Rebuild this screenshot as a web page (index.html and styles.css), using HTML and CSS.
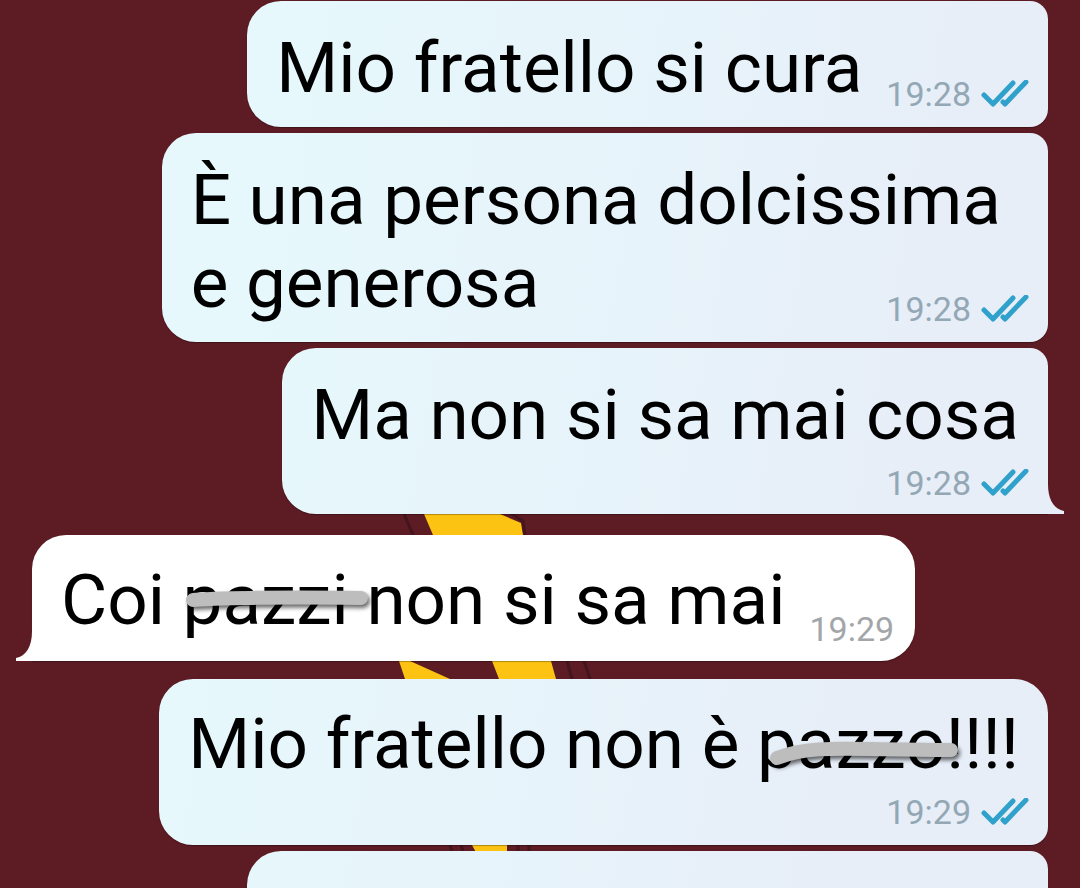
FILE: index.html
```
<!DOCTYPE html>
<html lang="it">
  <head>
    <meta charset="UTF-8" />
    <meta name="viewport" content="width=device-width, initial-scale=1.0" />
    <title>Chat</title>
    <link rel="stylesheet" href="styles.css">
  </head>
  <body>
    <!-- check marks and tail, reused by the messages -->
    <svg class="defs" aria-hidden="true">
      <symbol id="checks" viewBox="0 0 48 28">
        <path d="M3 15 L12 24 L32 3 M22 22 L24 24 L45 2" />
      </symbol>
      <symbol id="tail" viewBox="0 0 18 36">
        <path d="M0 0 H2 V6 C2 22 8 31 18 33 V36 H0 Z" />
      </symbol>
    </svg>

    <main class="chat">
      <svg class="wallpaper" width="1080" height="888" viewBox="0 0 1080 888" aria-hidden="true">
        <path class="bolt" d="M418 500 H470 L500 514 L521 523 L523 535 L551 661 L556 679 L507 845 V860 H480 L472 845 L499 679 L492 661 L433 535 Z" />
        <path class="bolt" d="M399 661 L410 661 L450 679 L460 700 L412 700 Z" />
        <path class="line" d="M404 514 L413 535 M505 510 L523 521 L525 535 M567 661 L572 679 M584 661 L590 679 M450 845 L452 851 M461 845 L463 851 M518 845 V851 M529 845 V851" />
      </svg>

      <ul class="messages">
        <li class="bubble out inline">
          <p class="text">Mio fratello si cura</p>
          <div class="meta"><time>19:28</time><svg class="checks"><use href="#checks" /></svg></div>
        </li>
        <li class="bubble out overlap">
          <p class="text">È una persona dolcissima<br>e generosa</p>
          <div class="meta"><time>19:28</time><svg class="checks"><use href="#checks" /></svg></div>
        </li>
        <li class="bubble out last">
          <p class="text">Ma non si sa mai cosa</p>
          <div class="meta"><time>19:28</time><svg class="checks"><use href="#checks" /></svg></div>
          <svg class="tail"><use href="#tail" /></svg>
        </li>
        <li class="bubble in inline">
          <p class="text">Coi <s class="struck">pazzi<svg class="stroke" viewBox="0 0 190 34"><path d="M10 14 C40 12 90 11 178 12" /></svg></s> non si sa mai</p>
          <div class="meta"><time>19:29</time></div>
          <svg class="tail"><use href="#tail" /></svg>
        </li>
        <li class="bubble out first">
          <p class="text">Mio fratello non è <s class="struck">pazzo<svg class="stroke low" viewBox="0 0 204 34"><path d="M20 18 C56 4 90 10 194 10" /></svg></s>!!!!</p>
          <div class="meta"><time>19:29</time><svg class="checks"><use href="#checks" /></svg></div>
        </li>
        <li class="bubble out next"></li>
      </ul>
    </main>
  </body>
</html>
```
FILE: styles.css
```
* {
  box-sizing: border-box;
}
body {
  margin: 0;
  background-color: #5d1b24;
  font-family: Roboto, sans-serif;
}
.defs {
  position: absolute;
  width: 0;
  height: 0;
}
.chat {
  position: relative;
  height: 100vh;
  overflow: hidden;
}
.wallpaper {
  position: absolute;
  top: 0;
  left: 0;
}
.bolt {
  fill: #fcc313;
}
.line {
  fill: none;
  stroke: #43151d;
  stroke-width: 3;
}
.messages {
  position: relative;
  display: flex;
  flex-direction: column;
  align-items: flex-end;
  gap: 6px;
  margin: 0;
  padding: 1px 32px 0;
  list-style: none;
}
.bubble {
  position: relative;
  display: grid;
  padding: 25px 19px 18px 29px;
  border-radius: 34px;
  box-shadow: 0 1px 1px rgba(0, 0, 0, 0.3);
}
.out {
  border-radius: 34px 18px 18px 34px;
  background: linear-gradient(100deg, #e6f8fc 25%, #e7f3fa 55%, #e7eef8 80%) fixed;
}
.out.last {
  padding-bottom: 16px;
  border-bottom-right-radius: 0;
}
.out.first {
  padding-top: 23px;
  border-top-right-radius: 34px;
}
.in {
  align-self: flex-start;
  margin: 15px 0 12px;
  padding: 23px 21px 20px 29px;
  border-bottom-left-radius: 0;
  background-color: #fff;
}
.text {
  margin: 0;
  padding-right: 10px;
  font-size: 71px;
  line-height: 83px;
  color: #000;
  white-space: nowrap;
}
.meta {
  display: flex;
  align-items: center;
  align-self: end;
  justify-self: end;
  gap: 10px;
  height: 30px;
  font-size: 34px;
  line-height: 30px;
  color: #93a8b4;
}
.inline {
  grid-template-columns: auto auto;
  column-gap: 14px;
}
.overlap .text {
  padding-right: 28px;
}
.overlap .text,
.overlap .meta {
  grid-area: 1 / 1;
}
.last,
.first {
  row-gap: 12px;
}
.in .meta {
  height: 24px;
  color: #a3a6a9;
}
.in .meta time {
  line-height: 24px;
}
.checks {
  width: 48px;
  height: 28px;
  fill: none;
  stroke: #2fa1cb;
  stroke-width: 5;
  stroke-linecap: round;
  stroke-linejoin: round;
}
.tail {
  position: absolute;
  right: -16px;
  bottom: 0;
  width: 18px;
  height: 36px;
  fill: #e7eef8;
}
.in .tail {
  right: auto;
  left: -16px;
  fill: #fff;
  transform: scaleX(-1);
}
.struck {
  position: relative;
  text-decoration: none;
}
/* grey marker stroke over the word */
.stroke {
  position: absolute;
  left: 0;
  top: 28px;
  width: 190px;
  height: 34px;
  overflow: visible;
  fill: none;
  stroke: #bdbdbd;
  stroke-width: 14;
  stroke-linecap: round;
  filter: drop-shadow(2px 3px 2px rgba(0, 0, 0, 0.6));
}
.stroke.low {
  top: 38px;
  width: 204px;
}
.next {
  width: 801px;
  height: 126px;
}
```
